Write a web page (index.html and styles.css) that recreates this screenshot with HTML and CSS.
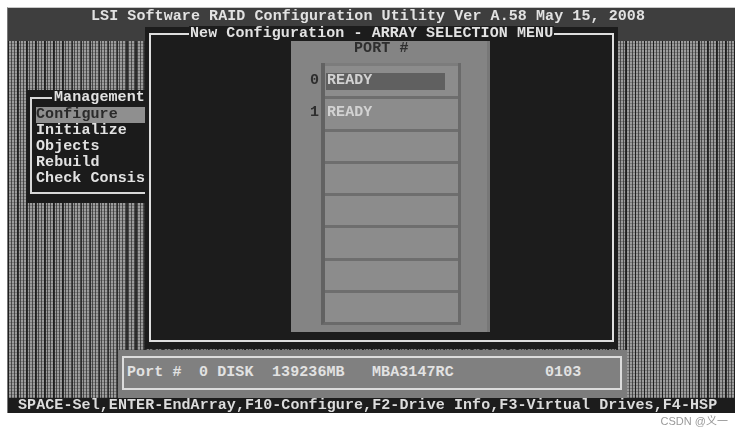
FILE: index.html
```html
<!DOCTYPE html>
<html lang="en">
<head>
<meta charset="utf-8">
<title>LSI Software RAID Configuration Utility</title>
<link rel="stylesheet" href="styles.css">
</head>
<body>
<div class="screen">
  <header class="title">LSI Software RAID Configuration Utility Ver A.58 May 15, 2008</header>
  <main class="desk">
    <section class="mgmt">
      <div class="mgmt-box">
        <h2 class="mgmt-title">Management</h2>
        <ul class="mgmt-list">
          <li class="sel">Configure</li>
          <li>Initialize</li>
          <li>Objects</li>
          <li>Rebuild</li>
          <li>Check Consis</li>
        </ul>
      </div>
    </section>
    <section class="dialog">
      <div class="dialog-frame">
        <h1 class="dialog-title">New Configuration - ARRAY SELECTION MENU</h1>
        <div class="ports">
          <div class="ports-head">PORT #</div>
          <div class="ports-body">
            <div class="nums">
              <span class="num num-0">0</span>
              <span class="num num-1">1</span>
            </div>
            <div class="slots">
              <div class="slot"><span class="ready hi">READY</span></div>
              <div class="slot"><span class="ready">READY</span></div>
              <div class="slot"></div>
              <div class="slot"></div>
              <div class="slot"></div>
              <div class="slot"></div>
              <div class="slot"></div>
              <div class="slot"></div>
            </div>
          </div>
        </div>
      </div>
    </section>
    <section class="info">
      <div class="info-box">
        <span class="c-a">Port #</span><span class="c-b">0 DISK</span><span class="c-c">139236MB</span><span class="c-d">MBA3147RC</span><span class="c-e">0103</span>
      </div>
    </section>
  </main>
  <footer class="keys">SPACE-Sel,ENTER-EndArray,F10-Configure,F2-Drive Info,F3-Virtual Drives,F4-HSP</footer>
</div>
<div class="credit">CSDN @义一</div>
</body>
</html>
```
FILE: styles.css
```css
* { box-sizing: border-box; margin: 0; padding: 0; }
html, body { background: #fff; overflow: hidden; }
body { width: 743px; height: 436px; padding: 7px 0 0 7px; position: relative; }

.screen {
  width: 728px; height: 406px;
  display: flex; flex-direction: column;
  border-top: 1px solid #c8c8c8;
  border-left: 1px solid #777;
  font: bold 15px/16px "Liberation Mono", "DejaVu Sans Mono", monospace;
  letter-spacing: 0.08px;
  color: #e2e2e2;
  white-space: nowrap;
  filter: blur(0.4px);
}

.title {
  height: 33px; flex: none;
  background: #3e3e3e;
  padding: 1px 0 0 83px;
}

.desk {
  flex: 1; position: relative;
  background-color: #9c9c9c;
  background-image:
    repeating-linear-gradient(90deg, rgba(20,20,20,.8) 0 1.5px, transparent 1.5px 9.08px),
    repeating-linear-gradient(0deg, rgba(40,40,40,.3) 0 1px, transparent 1px 3px),
    repeating-linear-gradient(90deg, rgba(40,40,40,.7) 0 1px, transparent 1px 3px);
}

.mgmt {
  position: absolute; left: 19px; top: 49px;
  width: 118px; height: 113px;
  background: #1b1b1b;
  padding: 7px 0 0 3px;
}
.mgmt-box {
  height: 97px;
  border: 2px solid #d8d8d8; border-right: 0;
  position: relative;
  padding: 8px 0 0 4px;
}
.mgmt-title {
  position: absolute; left: 20px; top: -9px;
  background: #1b1b1b; padding-left: 2px; padding-right: 1px;
  font: inherit;
}
.mgmt-list { list-style: none; }
.mgmt-list li { height: 16px; }
.mgmt-list .sel { background: #8f8f8f; color: #2a2a2a; }

.dialog {
  position: absolute; left: 137px; top: -14px;
  width: 473px; height: 322px;
  background: #1c1c1c;
  padding: 6px 4px 7px;
}
.dialog-frame {
  height: 100%;
  border: 2px solid #dedede;
  position: relative;
}
.dialog-title {
  position: absolute; left: 38px; top: -9px;
  background: #1c1c1c; padding: 0 1px;
  font: inherit; line-height: 15px;
}
.ports {
  width: 199px; height: 291px; margin: 6px 0 0 140px;
  background: #848484;
  border-right: 3px solid #787878;
  display: flex; flex-direction: column;
  color: #2e2e2e;
}
.ports-head { height: 22px; padding: 1px 0 0 63px; line-height: 14px; }
.ports-body { flex: 1; display: flex; padding-bottom: 7px; }
.nums { width: 30px; position: relative; }
.num { position: absolute; left: 19px; }
.num-0 { top: 10px; }
.num-1 { top: 42px; }
.slots {
  width: 140px;
  border-left: 4px solid #626262;
  border-bottom: 3px solid #6a6a6a;
  border-right: 3px solid #6a6a6a;
  background: #8c8c8c;
  display: flex; flex-direction: column;
}
.slot {
  flex: 1;
  border-top: 3px solid #6e6e6e;
  padding: 6px 13px 0 1px;
}
.slot:first-child { border-top-color: #7c7c7c; padding-top: 7px; }
.ready { display: block; height: 17px; padding-left: 1px; color: #d2d2d2; }
.hi { background: #606060; }

.info {
  position: absolute; left: 110px; top: 309px;
  width: 509px; height: 48px;
  background: #7c7c7c;
  padding: 6px 5px 8px 4px;
}
.info-box {
  height: 34px;
  border: 2px solid #dcdcdc;
  background: #808080;
  display: flex; align-items: center;
  padding-left: 3px;
  color: #e2e2e2;
}
.c-a { width: 72px; }
.c-b { width: 73px; }
.c-c { width: 100px; }
.c-d { width: 173px; }
.c-e { width: 40px; }

.keys {
  height: 15px; flex: none;
  background: #1c1c1c;
  padding-left: 10px;
  line-height: 15px;
  color: #dcdcdc;
}

.credit {
  position: absolute; right: 15px; top: 414px;
  font: 11px/14px "Liberation Sans", "Noto Sans CJK SC", sans-serif;
  color: #9a9a9a;
}
```
